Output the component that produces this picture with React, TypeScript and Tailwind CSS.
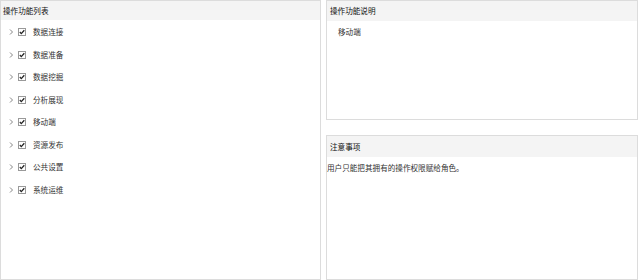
import React from 'react';

const items = ['数据连接', '数据准备', '数据挖掘', '分析展现', '移动端', '资源发布', '公共设置', '系统运维'];

const font = { fontFamily: '"Noto Sans CJK SC", "Noto Sans", sans-serif' };

const Chevron: React.FC = () => (
  <svg width="5" height="6" viewBox="0 0 5 6" className="shrink-0">
    <path d="M1 0.5 L3.5 3 L1 5.5" fill="none" stroke="#777" strokeWidth="0.9" />
  </svg>
);

const Check: React.FC = () => (
  <svg width="8" height="8" viewBox="0 0 8 8" className="shrink-0">
    <rect x="0.5" y="0.5" width="7" height="7" fill="#fff" stroke="#999" />
    <path d="M1.8 4 L3.3 5.6 L6.3 2.2" fill="none" stroke="#222" strokeWidth="1.3" />
  </svg>
);

const App: React.FC = () => {
  return (
    <div className="w-[640px] h-[280px] bg-white flex text-[7.6px] leading-none text-[#333]" style={font}>
      <div className="w-[321px] h-full border border-[#dcdcdc] flex flex-col">
        <div className="h-[19px] bg-[#f4f4f4] flex items-center pl-[2px] text-[#111]">操作功能列表</div>
        <div className="flex flex-col pt-[1px]">
          {items.map((it) => (
            <div key={it} className="h-[22.5px] flex items-center pl-[8px]">
              <Chevron />
              <span className="ml-[4px]"><Check /></span>
              <span className="ml-[7px] text-[#333]">{it}</span>
            </div>
          ))}
        </div>
      </div>
      <div className="ml-[5px] w-[312px] h-full flex flex-col">
        <div className="h-[120px] border border-[#dcdcdc] flex flex-col">
          <div className="h-[20px] bg-[#f4f4f4] flex items-center pl-[3px] text-[#111]">操作功能说明</div>
          <div className="pl-[11px] pt-[7px] text-[#333]">移动端</div>
        </div>
        <div className="mt-[15px] flex-1 border border-[#dcdcdc] flex flex-col">
          <div className="h-[21px] bg-[#f4f4f4] flex items-center pl-[3px] text-[#111]">注意事项</div>
          <div className="pt-[7px] text-[#333]">用户只能把其拥有的操作权限赋给角色。</div>
        </div>
      </div>
    </div>
  );
};

export default App;
